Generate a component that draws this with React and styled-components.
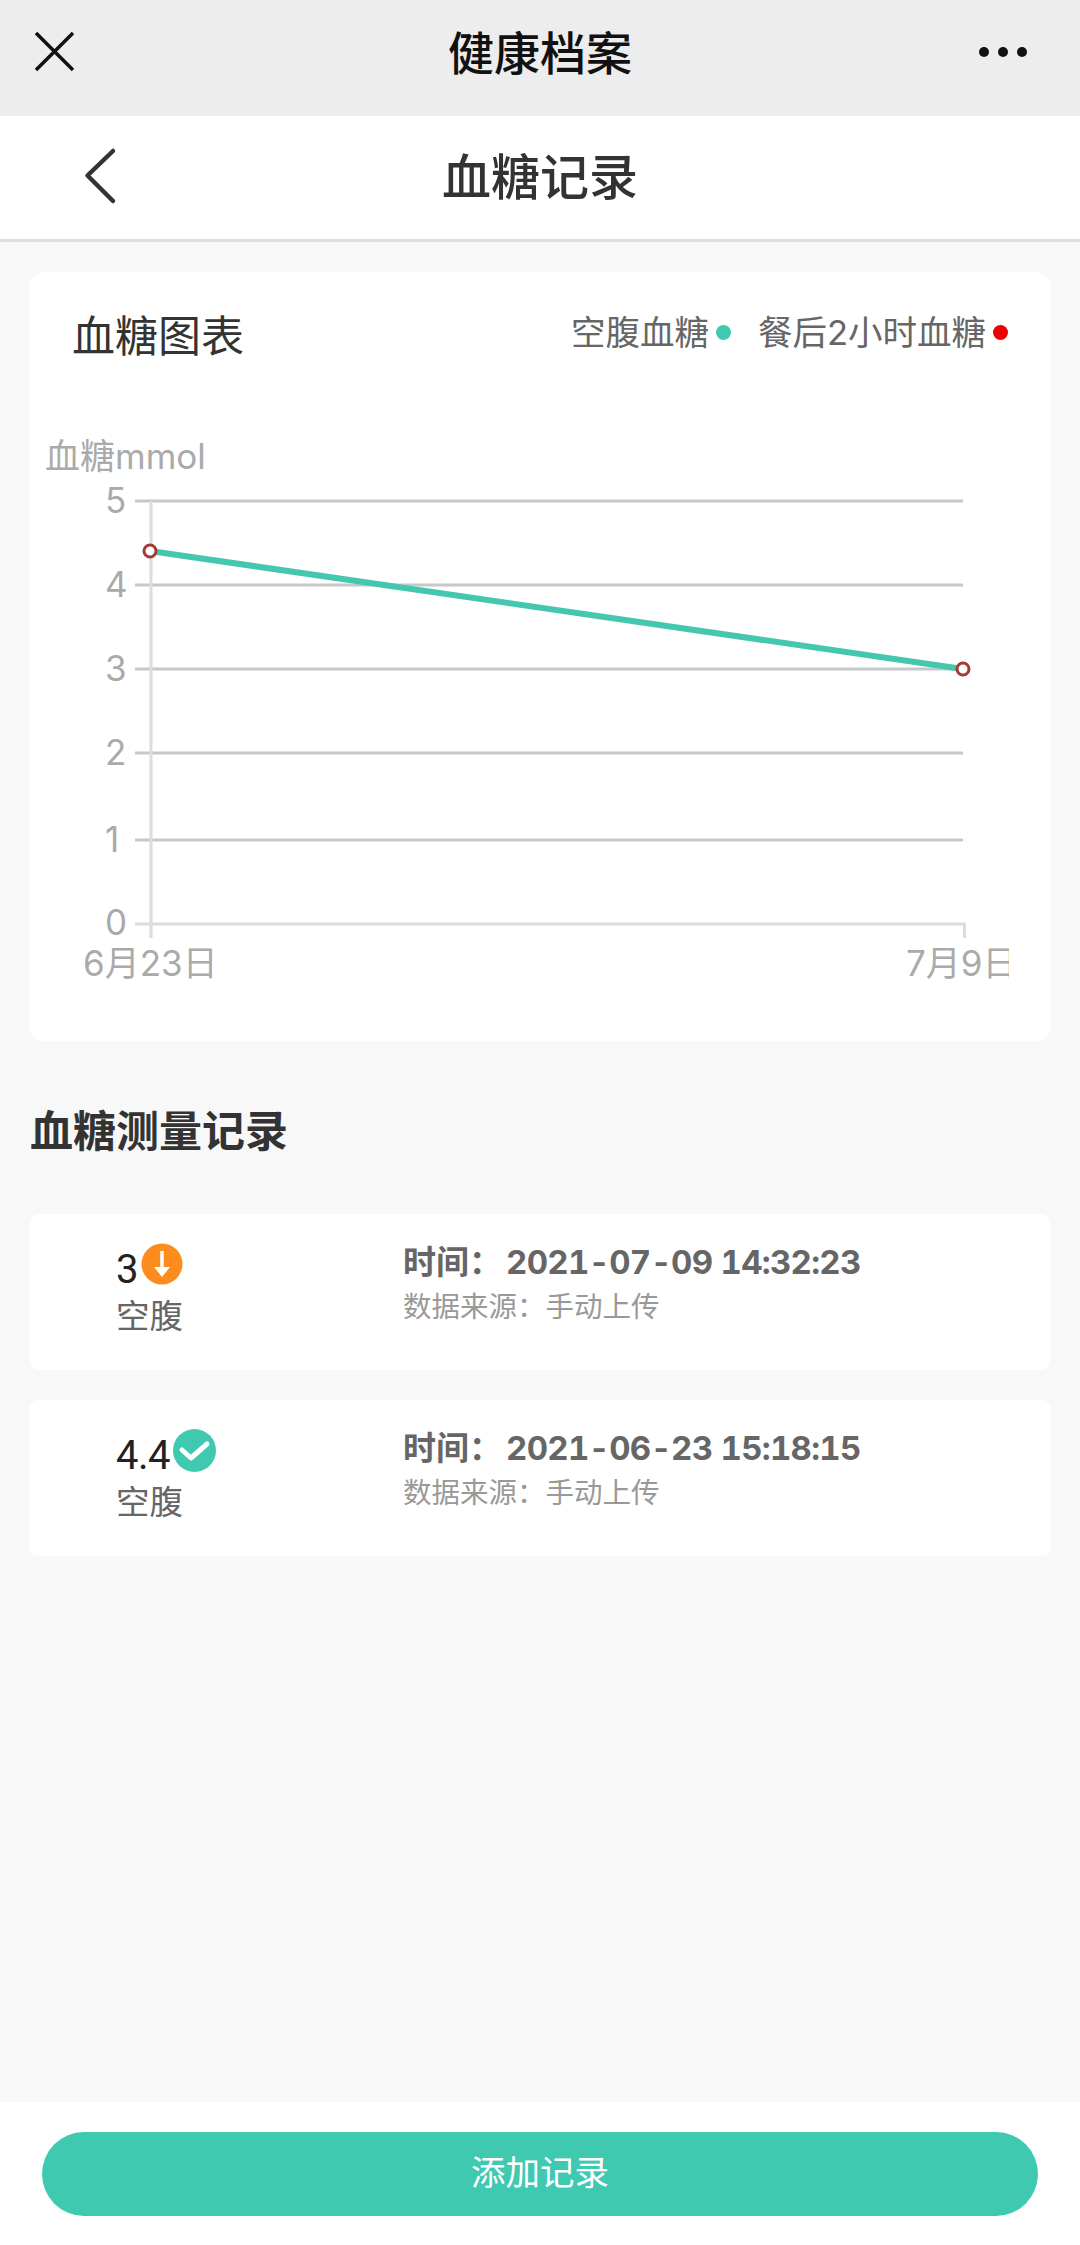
import React from 'react';
import styled, { createGlobalStyle } from 'styled-components';

const Global = createGlobalStyle`
  html, body { margin: 0; padding: 0; background: #f8f8f8; }
  body { font-family: Inter, "Noto Sans CJK SC", sans-serif; }
  * { box-sizing: border-box; }
`;

const Page = styled.div`
  width: 1080px;
  height: 2245px;
  display: flex;
  flex-direction: column;
  background: #f8f8f8;
`;

const WeChatBar = styled.div`
  height: 116px;
  flex: none;
  background: #ededed;
  display: grid;
  grid-template-columns: 1fr auto 1fr;
  align-items: start;
  padding: 17px 30px 0;
`;

const CloseIcon = styled.svg`
  margin-top: 11px;
`;

const WeChatTitle = styled.div`
  font: 500 46px/66px "Noto Sans CJK SC", sans-serif;
  color: #111;
`;

const MoreDots = styled.svg`
  margin: 29px 22px 0 0;
  justify-self: end;
`;

const NavBar = styled.div`
  height: 126px;
  flex: none;
  background: #fff;
  border-bottom: 3px solid #dedede;
  display: flex;
  align-items: center;
  position: relative;
  justify-content: center;
`;

const BackIcon = styled.svg`
  position: absolute;
  left: 82px;
  top: 30px;
`;

const NavTitle = styled.div`
  font: 500 49px/70px "Noto Sans CJK SC", sans-serif;
  color: #333;
  margin-bottom: 8px;
`;

const Main = styled.div`
  flex: 1;
  padding: 30px 30px 0;
  display: flex;
  flex-direction: column;
`;

const ChartCard = styled.section`
  height: 769px;
  background: #fff;
  border-radius: 14px;
  display: flex;
  flex-direction: column;
`;

const ChartHead = styled.div`
  display: flex;
  align-items: center;
  justify-content: space-between;
  padding: 26px 42px 0 42px;
  height: 95px;
`;

const ChartTitle = styled.h2`
  margin: 0;
  font: 400 43px/62px "Noto Sans CJK SC", sans-serif;
  color: #333;
`;

const Legend = styled.div`
  display: flex;
  align-items: center;
  gap: 27px;
`;

const LegendItem = styled.div`
  display: flex;
  align-items: center;
  gap: 7px;
  font: 400 34.5px/50px Inter, "Noto Sans CJK SC", sans-serif;
  color: #666;
`;

const Dot = styled.span`
  width: 15px;
  height: 15px;
  border-radius: 50%;
  background: ${p => p.$color};
`;

const ChartSvg = styled.svg`
  display: block;
  flex: none;
  text {
    font-family: Inter, "Noto Sans CJK SC", sans-serif;
    font-size: 35px;
    fill: #aaa;
  }
`;

const SectionTitle = styled.h3`
  margin: 56px 0 55px;
  font: 700 43px/62px "Noto Sans CJK SC", sans-serif;
  color: #333;
`;

const RecordList = styled.div`
  display: flex;
  flex-direction: column;
  gap: 30px;
`;

const RecordCard = styled.div`
  height: 156px;
  background: #fff;
  border-radius: 8px;
  display: grid;
  grid-template-columns: 373px 1fr;
`;

const ValueCol = styled.div`
  padding: 27px 0 0 86px;
`;

const ValueRow = styled.div`
  display: flex;
  align-items: flex-start;
  gap: 3px;
  height: 50px;
`;

const Value = styled.span`
  font: 400 40px/58px Roboto, sans-serif;
  letter-spacing: -0.5px;
  color: #222;
`;

const Badge = styled.svg`
  display: block;
  margin-top: 2px;
`;

const Meal = styled.div`
  font: 400 33.5px/48px "Noto Sans CJK SC", sans-serif;
  color: #666;
  margin-top: -1px;
`;

const InfoCol = styled.div`
  padding-top: 25px;
`;

const TimeText = styled.div`
  font: 700 33px/46px Inter, "Noto Sans CJK SC", sans-serif;
  color: #666;
`;

const TimeValue = styled.span`
  margin-left: 4px;
  font-variant-numeric: tabular-nums;
  letter-spacing: -0.7px;
`;

const SourceText = styled.div`
  font: 400 28.5px/40px "Noto Sans CJK SC", sans-serif;
  color: #999;
`;

const Footer = styled.div`
  height: 143px;
  flex: none;
  background: #fff;
  padding: 30px 42px 0;
`;

const AddButton = styled.button`
  width: 100%;
  height: 84px;
  border: 0;
  border-radius: 42px;
  background: #40c9b1;
  color: #fff;
  font: 400 34.5px/50px "Noto Sans CJK SC", sans-serif;
  padding: 0 0 8px;
`;

const ticks = [
  { label: '5', y: 501 },
  { label: '4', y: 585 },
  { label: '3', y: 669 },
  { label: '2', y: 753 },
  { label: '1', y: 840 },
];

const records = [
  { value: '3', status: 'low', time: '2021-07-09 14:32:23' },
  { value: '4.4', status: 'ok', time: '2021-06-23 15:18:15' },
];

const LowBadge = () => (
  <Badge width="42" height="42" viewBox="0 0 42 42">
    <circle cx="21" cy="21" r="20.5" fill="#fb8c1d" />
    <path d="M21 8v17" stroke="#fff" strokeWidth="3.5" />
    <path d="M13 24h16l-8 10z" fill="#fff" />
  </Badge>
);

const OkBadge = () => (
  <Badge width="43" height="43" viewBox="0 0 43 43">
    <circle cx="21.5" cy="21.5" r="21.5" fill="#40c9b1" />
    <path d="M9 21l9 8 16-14" fill="none" stroke="#fff" strokeWidth="5" strokeLinecap="round" strokeLinejoin="round" />
  </Badge>
);

// chart coordinates are page coordinates shifted by the svg's origin (30, 367)
const ox = 30;
const oy = 367;

const Chart = () => (
  <ChartSvg width="1020" height="640" viewBox={`${ox} ${oy} 1020 640`}>
    <defs>
      <clipPath id="last-label">
        <rect x="880" y="930" width="129" height="60" />
      </clipPath>
    </defs>
    <text x="45" y="469">血糖mmol</text>
    {ticks.map(t => (
      <g key={t.label}>
        <line x1="135" x2="963" y1={t.y} y2={t.y} stroke="#c8c8c8" strokeWidth="3" />
        <text x="105" y={t.y + 12}>{t.label}</text>
      </g>
    ))}
    <text x="105" y="935">0</text>
    <line x1="135" x2="966" y1="924" y2="924" stroke="#dcdcdc" strokeWidth="3" />
    <line x1="151" x2="151" y1="501" y2="938" stroke="#dcdcdc" strokeWidth="3" />
    <line x1="964.5" x2="964.5" y1="924" y2="938" stroke="#dcdcdc" strokeWidth="3" />
    <line x1="150" y1="551" x2="963" y2="669" stroke="#45c6ae" strokeWidth="6" />
    <circle cx="150" cy="551" r="6" fill="#fff" stroke="#a33a36" strokeWidth="3" />
    <circle cx="963" cy="669" r="6" fill="#fff" stroke="#a33a36" strokeWidth="3" />
    <text x="83" y="976">6月23日</text>
    <text x="906" y="976" clipPath="url(#last-label)">7月9日</text>
  </ChartSvg>
);

export default function App() {
  return (
    <Page>
      <Global />
      <WeChatBar>
        <CloseIcon width="44" height="44" viewBox="0 0 44 44">
          <path d="M6 5l37 37M43 5L6 42" stroke="#111" strokeWidth="3.5" fill="none" />
        </CloseIcon>
        <WeChatTitle>健康档案</WeChatTitle>
        <MoreDots width="50" height="12" viewBox="0 0 50 12">
          <circle cx="6" cy="6" r="5" fill="#111" />
          <circle cx="25" cy="6" r="5" fill="#111" />
          <circle cx="44" cy="6" r="5" fill="#111" />
        </MoreDots>
      </WeChatBar>
      <NavBar>
        <BackIcon width="36" height="60" viewBox="0 0 36 60">
          <path d="M31 5L5.5 29.5 31 55" stroke="#333" strokeWidth="4.5" fill="none" strokeLinecap="round" strokeLinejoin="round" />
        </BackIcon>
        <NavTitle>血糖记录</NavTitle>
      </NavBar>
      <Main>
        <ChartCard>
          <ChartHead>
            <ChartTitle>血糖图表</ChartTitle>
            <Legend>
              <LegendItem>空腹血糖<Dot $color="#40c9b1" /></LegendItem>
              <LegendItem>餐后2小时血糖<Dot $color="#f00000" /></LegendItem>
            </Legend>
          </ChartHead>
          <Chart />
        </ChartCard>
        <SectionTitle>血糖测量记录</SectionTitle>
        <RecordList>
          {records.map(r => (
            <RecordCard key={r.time}>
              <ValueCol>
                <ValueRow>
                  <Value>{r.value}</Value>
                  {r.status === 'low' ? <LowBadge /> : <OkBadge />}
                </ValueRow>
                <Meal>空腹</Meal>
              </ValueCol>
              <InfoCol>
                <TimeText>时间：<TimeValue>{r.time}</TimeValue></TimeText>
                <SourceText>数据来源：手动上传</SourceText>
              </InfoCol>
            </RecordCard>
          ))}
        </RecordList>
      </Main>
      <Footer>
        <AddButton>添加记录</AddButton>
      </Footer>
    </Page>
  );
}
